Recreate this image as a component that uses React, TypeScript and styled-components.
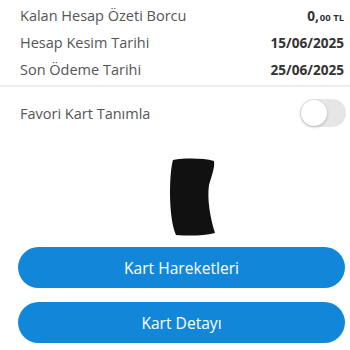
import styled, { createGlobalStyle } from 'styled-components';

const GlobalStyle = createGlobalStyle`
  body {
    margin: 0;
    background: #ffffff;
    font-family: "Open Sans", "Noto Sans", sans-serif;
  }
`;

const Page = styled.div`
  width: 350px;
  height: 350px;
  overflow: hidden;
  display: flex;
  flex-direction: column;
`;

const Summary = styled.div`
  display: flex;
  flex-direction: column;
  gap: 7px;
  padding: 5px 6px 6px 20px;
  border-bottom: 2px solid #eeeeee;
`;

const Row = styled.div`
  display: flex;
  justify-content: space-between;
  align-items: center;
  height: 20px;
`;

const Label = styled.span`
  color: #555555;
  font-size: 14.5px;
`;

const Value = styled.span`
  color: #333333;
  font-size: 13.6px;
  font-weight: 700;
`;

const Currency = styled.span`
  font-size: 9.5px;
  margin-left: 1px;
`;

const FavoriteRow = styled.div`
  display: flex;
  justify-content: space-between;
  align-items: center;
  padding: 12px 4px 0 20px;
`;

const Toggle = styled.div`
  width: 46px;
  height: 28px;
  border-radius: 14px;
  background: #e6e6e6;
  position: relative;
`;

const Knob = styled.div`
  position: absolute;
  left: 1px;
  top: 1px;
  width: 26px;
  height: 26px;
  border-radius: 50%;
  background: #ffffff;
  box-shadow: 0 1px 3px rgba(0, 0, 0, 0.25);
`;

const Redacted = styled.div`
  display: flex;
  justify-content: center;
  padding: 30px 0 10px 36px;
`;

const Buttons = styled.div`
  display: flex;
  flex-direction: column;
  gap: 14px;
  padding: 0 5px 0 18px;
`;

const Button = styled.button`
  height: 41px;
  border: none;
  border-radius: 21px;
  background: #1287d9;
  color: #ffffff;
  font-family: "Open Sans", "Noto Sans", sans-serif;
  font-size: 15.6px;
  font-weight: 400;
`;

export default function App() {
  return (
    <Page>
      <GlobalStyle />
      <Summary>
        <Row>
          <Label>Kalan Hesap Özeti Borcu</Label>
          <Value>
            0,<Currency>00 TL</Currency>
          </Value>
        </Row>
        <Row>
          <Label>Hesap Kesim Tarihi</Label>
          <Value>15/06/2025</Value>
        </Row>
        <Row>
          <Label>Son Ödeme Tarihi</Label>
          <Value>25/06/2025</Value>
        </Row>
      </Summary>
      <FavoriteRow>
        <Label>Favori Kart Tanımla</Label>
        <Toggle>
          <Knob />
        </Toggle>
      </FavoriteRow>
      <Redacted>
        <svg width="48" height="80" viewBox="0 0 48 80">
          <path
            d="M4 3 C16 1 34 1 45 4 C46 10 43 18 40 28 C38 42 41 60 46 76 C34 79 20 79 7 78 C3 70 1 52 1 36 C1 22 2 10 4 3 Z"
            fill="#111111"
          />
        </svg>
      </Redacted>
      <Buttons>
        <Button>Kart Hareketleri</Button>
        <Button>Kart Detayı</Button>
      </Buttons>
    </Page>
  );
}
